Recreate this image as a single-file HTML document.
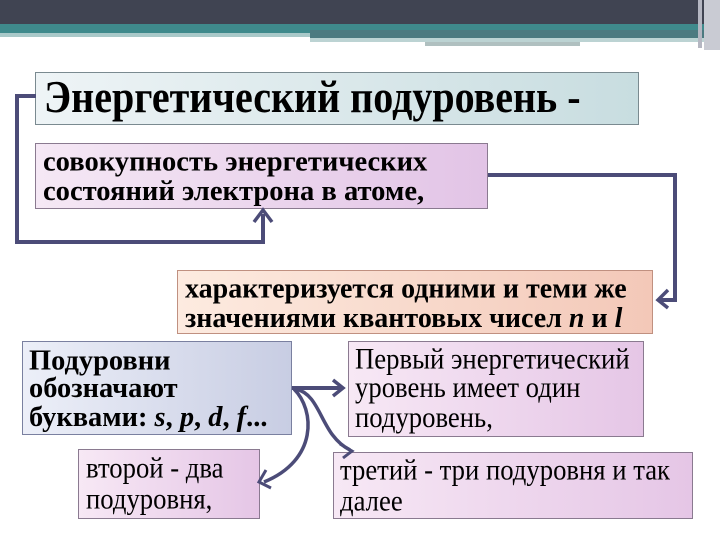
<!DOCTYPE html>
<html><head><meta charset="utf-8"><style>
body{margin:0;width:720px;height:540px;background:#fff;position:relative;overflow:hidden;font-family:"Liberation Serif",serif}
.b{position:absolute;box-sizing:border-box;border:1px solid #8a7a90;color:#000}
.t{white-space:nowrap;transform-origin:0 0;display:block;font-size:21px;font-family:"Liberation Serif",serif}
svg{z-index:5}
</style></head><body>
<div style="position:absolute;left:0;top:0;width:720px;height:25px;background:#404452"></div>
<div style="position:absolute;left:0;top:24px;width:705px;height:9px;background:#3f8a8c"></div>
<div style="position:absolute;left:310px;top:30px;width:395px;height:8px;background:#4c7a80"></div>
<div style="position:absolute;left:0;top:33px;width:310px;height:4px;background:#a9c9c9"></div>
<div style="position:absolute;left:310px;top:38px;width:395px;height:4px;background:#bcd3d3"></div>
<div style="position:absolute;left:425px;top:42px;width:155px;height:4px;background:#b0c0c0"></div>
<div style="position:absolute;left:698px;top:0;width:4px;height:48px;background:#b5b7c2"></div>
<div style="position:absolute;left:704px;top:0;width:16px;height:50px;background:#c9cbd3"></div>

<div class="b" style="left:35px;top:72px;width:604px;height:53px;background:linear-gradient(90deg,#eef4f6,#c8dde0);border-color:#7a8a90">
<span class="t" style="font-weight:bold;line-height:21px;position:absolute;left:8px;top:2px;transform:scale(1.906,2.19)">Энергетический подуровень -</span></div>

<div class="b" style="left:35px;top:143px;width:453px;height:66px;background:linear-gradient(90deg,#f5e8f5,#e2c4e6)">
<span class="t" style="font-weight:bold;line-height:21.75px;position:absolute;left:7px;top:4px;transform:scale(1.36,1.333)">совокупность энергетических<br>состояний электрона в атоме,</span></div>

<div class="b" style="left:177px;top:270px;width:476px;height:64px;background:linear-gradient(90deg,#fdebe0,#f3c8b8);border-color:#c09080">
<span class="t" style="font-weight:bold;line-height:21.75px;position:absolute;left:7px;top:4px;transform:scale(1.333,1.333)">характеризуется одними и теми же<br>значениями квантовых чисел <i>n</i> и <i>l</i></span></div>

<div class="b" style="left:22px;top:341px;width:270px;height:94px;background:linear-gradient(90deg,#eceff8,#c8cde3);border-color:#7a80a0">
<span class="t" style="font-weight:bold;line-height:20.3px;position:absolute;left:6px;top:4px;transform:scale(1.353,1.381)">Подуровни<br>обозначают<br>буквами: <i>s</i>, <i>p</i>, <i>d</i>, <i>f</i>...</span></div>

<div class="b" style="left:348px;top:341px;width:296px;height:96px;background:linear-gradient(90deg,#f7e8f5,#e5c6e6)">
<span class="t" style="line-height:20.3px;position:absolute;left:6px;top:2px;transform:scale(1.271,1.429)">Первый энергетический<br>уровень имеет один<br>подуровень,</span></div>

<div class="b" style="left:78px;top:449px;width:182px;height:70px;background:linear-gradient(90deg,#f7e8f5,#e5c6e6)">
<span class="t" style="line-height:21.7px;position:absolute;left:7px;top:3px;transform:scale(1.271,1.429)">второй - два<br>подуровня,</span></div>

<div class="b" style="left:333px;top:452px;width:360px;height:67px;background:linear-gradient(90deg,#f7e8f5,#e5c6e6)">
<span class="t" style="line-height:21.7px;position:absolute;left:6px;top:2px;transform:scale(1.271,1.429)">третий - три подуровня и так<br>далее</span></div>

<svg style="position:absolute;left:0;top:0" width="720" height="540">
<g fill="none" stroke="#4c4c78" stroke-width="4">
<path d="M36 96 H17 V242 H263 V214"/>
<path d="M254 222 L263 210 L272 222" stroke-width="3.5"/>
<path d="M488 175 H675 V300 H660"/>
<path d="M668 290 L658 300 L668 308" stroke-width="3.5"/>
<path d="M292 388 H342"/>
<path d="M333 380 L343 388 L333 396" stroke-width="3.5"/>
<path d="M294 389 C315 410 318 460 264 482" stroke-width="3.5"/>
<path d="M266 470 L259 482 L271 488" stroke-width="3"/>
<path d="M296 389 C322 395 320 435 350 450" stroke-width="3.5"/>
<path d="M340 444 L352 451 L343 458" stroke-width="3"/>
</g></svg>
</body></html>
